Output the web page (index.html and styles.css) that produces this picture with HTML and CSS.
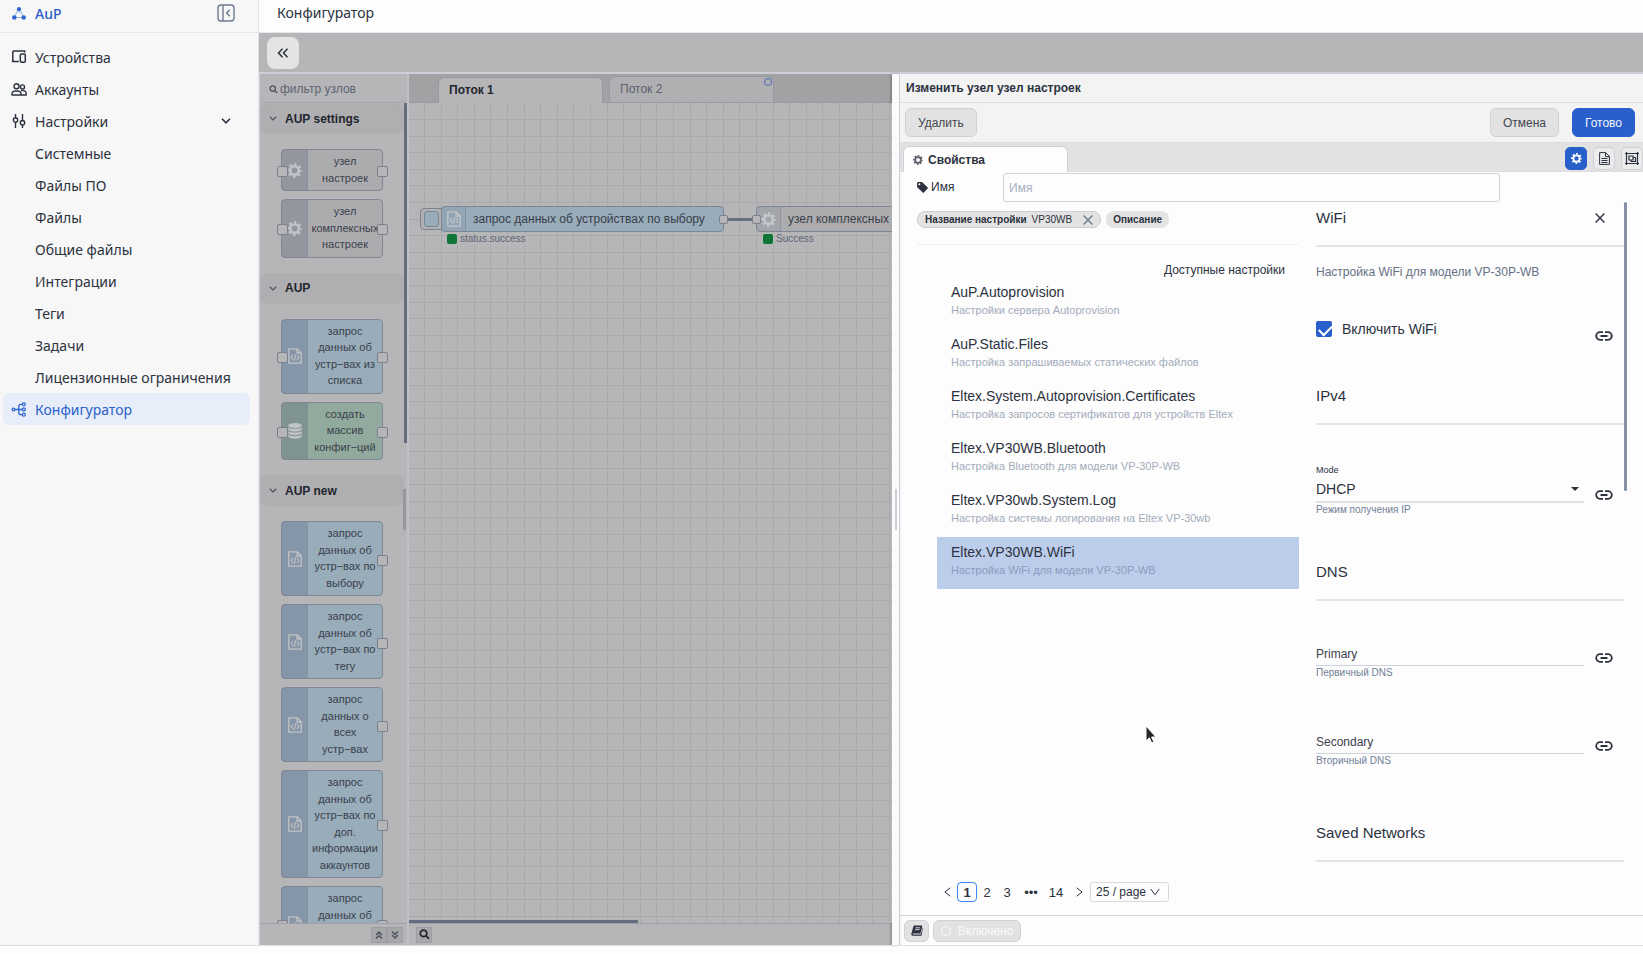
FILE: index.html
```html
<!DOCTYPE html>
<html lang="ru">
    <head>
        <meta charset="utf-8">
        <title>AuP - Конфигуратор</title>
        <link rel="stylesheet" href="styles.css">
    </head>
    <body>
        <svg class="defs" width="0" height="0">
            <symbol id="i-gear" viewBox="0 0 16 16">
                <circle cx="8" cy="8" r="4.600" fill="none" stroke="currentColor" stroke-width="2.800"/>
                <circle cx="8" cy="8" r="6.600" fill="none" stroke="currentColor" stroke-width="2.600" stroke-dasharray="2.600 2.584" stroke-dashoffset="1.300"/>
            </symbol>
            <symbol id="i-code" viewBox="0 0 14 16">
                <path d="M.8.8h8.400l4 4v10.400H.8zM9 .8v4.200h4.200" fill="none" stroke="currentColor" stroke-width="1.300"/>
                <path d="M5 7 3.200 9.500 5 12M9 7l1.800 2.500L9 12M7.700 6.200l-1.400 6.600" fill="none" stroke="currentColor" stroke-width="1.100"/>
            </symbol>
            <symbol id="i-db" viewBox="0 0 14 16">
                <ellipse cx="7" cy="2.600" rx="6.800" ry="2.500"/>
                <path d="M.2 4.200c2 2.200 11.600 2.200 13.600 0v2.200c-1.400 2.700-12.200 2.700-13.600 0zM.2 7.900c2 2.200 11.600 2.200 13.600 0v2.200c-1.400 2.700-12.200 2.700-13.600 0zM.2 11.600c2 2.200 11.600 2.200 13.600 0v1.700c-1.400 3.200-12.200 3.200-13.600 0z"/>
            </symbol>
            <symbol id="i-search" viewBox="0 0 12 12">
                <path d="M5 1.200a3.600 3.600 0 1 0 0 7.200 3.600 3.600 0 0 0 0-7.200zM7.800 7.600l3.200 3.200" fill="none" stroke="currentColor" stroke-width="1.900"/>
            </symbol>
            <symbol id="i-down" viewBox="0 0 10 6">
                <path d="M1 .8 5 4.800 9 .8" fill="none" stroke="currentColor" stroke-width="1.600"/>
            </symbol>
            <symbol id="i-link" viewBox="0 0 18 10">
                <path d="M8 1.200H5a3.800 3.800 0 0 0 0 7.600h3M10 1.200h3a3.800 3.800 0 0 1 0 7.600h-3M5.500 5h7" fill="none" stroke="currentColor" stroke-width="1.800"/>
            </symbol>
            <symbol id="i-close" viewBox="0 0 10 10">
                <path d="m.6.6 8.800 8.800M9.400.6.6 9.400" fill="none" stroke="currentColor" stroke-width="1.400"/>
            </symbol>
        </svg>

        <div class="app">
            <aside class="sidebar">
                <div class="brand">
                    <svg class="brand-logo" viewBox="0 0 14 13" width="14" height="13">
                        <path d="M7 3v3M5.500 3.500 3 9M8.500 3.500 11 9M4 10.500h6" stroke="#8fb0e4" fill="none"/>
                        <g fill="#2f66cd"><circle cx="7" cy="2.200" r="2.100"/><circle cx="2.300" cy="10.500" r="2.300"/><circle cx="11.700" cy="10.500" r="2.300"/></g>
                    </svg>
                    <a href="#" class="brand-name">AuP</a>
                    <button class="collapse" aria-label="Свернуть меню">
                        <svg viewBox="0 0 18 18" width="18" height="18" fill="none" stroke="#6d7b90" stroke-width="1.400">
                            <rect x="1" y="1" width="16" height="16" rx="3"/><path d="M6 1v16M12.800 5.800 9.600 9l3.200 3.200"/>
                        </svg>
                    </button>
                </div>
                <nav class="menu">
                    <a href="#" class="menu-item">
                        <svg viewBox="0 0 16 14" width="16" height="14" fill="none" stroke="#2c3240" stroke-width="1.500"><path d="M7.500 11.500H3.200c-1 0-1.400-.5-1.400-1.400V2.300c0-1 .4-1.400 1.400-1.400h10.500v1.700M.8 11.500h7"/><rect x="9.300" y="4" width="5" height="8.300" rx="1.200"/></svg>
                        Устройства
                    </a>
                    <a href="#" class="menu-item">
                        <svg viewBox="0 0 16 13" width="16" height="13" fill="none" stroke="#2c3240" stroke-width="1.400"><circle cx="5.500" cy="3.300" r="2.500"/><circle cx="11.500" cy="3.900" r="2"/><path d="M1.200 12c-.8-2 .8-4 2.800-4h3c2 0 3.500 2 2.900 4zM10 7.500h2.200c2 0 3.400 1.700 2.900 4.500H10"/></svg>
                        Аккаунты
                    </a>
                    <a href="#" class="menu-item">
                        <svg viewBox="0 0 14 14" width="14" height="14" fill="none" stroke="#2c3240" stroke-width="1.400"><path d="M3.500 0v4M3.500 8v6M10.500 0v6.500M10.500 11v3"/><circle cx="3.500" cy="6" r="2.200"/><circle cx="10.500" cy="8.700" r="2.200"/></svg>
                        Настройки
                        <svg class="menu-arrow" width="10" height="6" color="#2c3240"><use href="#i-down"/></svg>
                    </a>
                    <a href="#" class="menu-item sub">Системные</a>
                    <a href="#" class="menu-item sub">Файлы ПО</a>
                    <a href="#" class="menu-item sub">Файлы</a>
                    <a href="#" class="menu-item sub">Общие файлы</a>
                    <a href="#" class="menu-item sub">Интеграции</a>
                    <a href="#" class="menu-item sub">Теги</a>
                    <a href="#" class="menu-item sub">Задачи</a>
                    <a href="#" class="menu-item sub">Лицензионные ограничения</a>
                    <a href="#" class="menu-item active">
                        <svg viewBox="0 0 15 15" width="15" height="15" fill="none" stroke="#2f66cd" stroke-width="1.300"><circle cx="2" cy="7.500" r="1.400"/><circle cx="12.300" cy="2.300" r="1.500"/><circle cx="12.300" cy="7.500" r="1.500"/><circle cx="12.300" cy="12.700" r="1.500"/><path d="M3.400 7.500h7.400M10.800 2.300H9.500c-1.500 0-2.200.8-2.200 2.200v6c0 1.400.7 2.200 2.200 2.200h1.300"/></svg>
                        Конфигуратор
                    </a>
                </nav>
            </aside>

            <main class="main">
                <h1 class="page-title">Конфигуратор</h1>
                <div class="toolbar">
                    <button class="back" aria-label="Назад">
                        <svg viewBox="0 0 12 10" width="12" height="10" fill="none" stroke="#2c3240" stroke-width="1.500"><path d="M5.500.8 1.500 5l4 4.200M10.500.8 6.500 5l4 4.200"/></svg>
                    </button>
                </div>

                <div class="editor">
                    <section class="palette">
                        <label class="palette-search">
                            <svg width="9" height="9"><use href="#i-search"/></svg>
                            <input type="text" placeholder="фильтр узлов" aria-label="фильтр узлов">
                        </label>
                        <div class="palette-list">
                            <div class="category"><svg width="8" height="5"><use href="#i-down"/></svg>AUP settings</div>
                            <div class="nodes">
                                <div class="node grey in out"><span class="node-icon"><svg width="15" height="15"><use href="#i-gear"/></svg></span><span class="node-label">узел<br>настроек</span></div>
                                <div class="node grey in out"><span class="node-icon"><svg width="15" height="15"><use href="#i-gear"/></svg></span><span class="node-label">узел<br>комплексных<br>настроек</span></div>
                            </div>
                            <div class="category"><svg width="8" height="5"><use href="#i-down"/></svg>AUP</div>
                            <div class="nodes">
                                <div class="node blue in out"><span class="node-icon"><svg width="14" height="16"><use href="#i-code"/></svg></span><span class="node-label">запрос<br>данных об<br>устр−вах из<br>списка</span></div>
                                <div class="node green in out"><span class="node-icon"><svg width="14" height="16"><use href="#i-db"/></svg></span><span class="node-label">создать<br>массив<br>конфиг−ций</span></div>
                            </div>
                            <div class="category"><svg width="8" height="5"><use href="#i-down"/></svg>AUP new</div>
                            <div class="nodes">
                                <div class="node blue out"><span class="node-icon"><svg width="14" height="16"><use href="#i-code"/></svg></span><span class="node-label">запрос<br>данных об<br>устр−вах по<br>выбору</span></div>
                                <div class="node blue out"><span class="node-icon"><svg width="14" height="16"><use href="#i-code"/></svg></span><span class="node-label">запрос<br>данных об<br>устр−вах по<br>тегу</span></div>
                                <div class="node blue out"><span class="node-icon"><svg width="14" height="16"><use href="#i-code"/></svg></span><span class="node-label">запрос<br>данных о<br>всех<br>устр−вах</span></div>
                                <div class="node blue out"><span class="node-icon"><svg width="14" height="16"><use href="#i-code"/></svg></span><span class="node-label">запрос<br>данных об<br>устр−вах по<br>доп.<br>информации<br>аккаунтов</span></div>
                                <div class="node blue in out"><span class="node-icon"><svg width="14" height="16"><use href="#i-code"/></svg></span><span class="node-label">запрос<br>данных об<br>устр−вах по<br>списку</span></div>
                            </div>
                            <i class="palette-scroll"></i>
                            <i class="palette-grip"></i>
                        </div>
                        <div class="palette-footer">
                            <button aria-label="Свернуть все"><svg viewBox="0 0 8 8" width="8" height="8" fill="none" stroke="currentColor" stroke-width="1.500"><path d="m1 4 3-3 3 3M1 7.500l3-3 3 3"/></svg></button>
                            <button aria-label="Развернуть все"><svg viewBox="0 0 8 8" width="8" height="8" fill="none" stroke="currentColor" stroke-width="1.500"><path d="m1 .5 3 3 3-3M1 4l3 3 3-3"/></svg></button>
                        </div>
                    </section>

                    <section class="workspace">
                        <div class="flow-tabs">
                            <a href="#" class="flow-tab current">Поток 1</a>
                            <a href="#" class="flow-tab">Поток 2<i class="changed"></i></a>
                        </div>
                        <div class="canvas">
                            <span class="inject"><i></i></span>
                            <div class="flow-node n1 blue"><span class="flow-icon"><svg width="14" height="16"><use href="#i-code"/></svg></span>запрос данных об устройствах по выбору</div>
                            <i class="wire"></i>
                            <div class="flow-node n2 grey"><span class="flow-icon"><svg width="15" height="15"><use href="#i-gear"/></svg></span>узел комплексных настроек</div>
                            <i class="port p1"></i>
                            <i class="port p2"></i>
                            <span class="status s1">status.success</span>
                            <span class="status s2">Success</span>
                            <i class="canvas-scroll"></i>
                        </div>
                        <div class="canvas-footer">
                            <button aria-label="Поиск"><svg width="11" height="11"><use href="#i-search"/></svg></button>
                        </div>
                    </section>

                    <div class="splitter"><i></i></div>

                    <section class="tray">
                        <h2 class="tray-title">Изменить узел узел настроек</h2>
                        <div class="tray-buttons">
                            <button class="btn">Удалить</button>
                            <button class="btn push">Отмена</button>
                            <button class="btn primary">Готово</button>
                        </div>
                        <div class="tray-tabs">
                            <a href="#" class="tray-tab"><svg width="10" height="10"><use href="#i-gear"/></svg>Свойства</a>
                            <div class="tray-tools">
                                <button class="tool on" aria-label="Свойства"><svg width="11" height="11"><use href="#i-gear"/></svg></button>
                                <button class="tool" aria-label="Описание"><svg viewBox="0 0 11 13" width="11" height="13" fill="none" stroke="currentColor"><path d="M.6.6h6l3.800 3.800v8H.6zM6.500.6v4h4M2.500 6.500h6M2.500 8.500h6M2.500 10.500h6"/></svg></button>
                                <button class="tool" aria-label="Внешний вид"><svg viewBox="0 0 14 13" width="14" height="13" fill="none" stroke="currentColor" stroke-width="1.200"><path d="M1.500 1.500h11v10h-11zM4 4h4v4H4zM8 5.500h2.500v4H6V8"/><path d="M0 1.500h3M11 1.500h3M0 11.500h3M11 11.500h3M1.500 0v3M12.500 0v3M1.500 10v3M12.500 10v3"/></svg></button>
                            </div>
                        </div>

                        <div class="tray-body">
                            <div class="name-row">
                                <label for="node-name"><svg viewBox="0 0 11 11" width="11" height="11" fill="#2c3240"><path fill-rule="evenodd" d="M0 .8 1 0h4l5.700 5.400c.4.400.4.800 0 1.200l-3.800 4c-.4.400-.8.400-1.200 0L.2 5.300zm2.400.5a1 1 0 1 0 0 2 1 1 0 0 0 0-2z"/></svg>Имя</label>
                                <input id="node-name" type="text" placeholder="Имя">
                            </div>

                            <div class="columns">
                                <div class="left">
                                    <div class="pills">
                                        <span class="pill outlined"><b>Название настройки</b> VP30WB <button aria-label="Убрать"><svg width="10" height="10"><use href="#i-close"/></svg></button></span>
                                        <span class="pill"><b>Описание</b></span>
                                    </div>
                                    <div class="available">Доступные настройки</div>
                                    <ul class="settings">
                                        <li><b>AuP.Autoprovision</b><span>Настройки сервера Autoprovision</span></li>
                                        <li><b>AuP.Static.Files</b><span>Настройка запрашиваемых статических файлов</span></li>
                                        <li><b>Eltex.System.Autoprovision.Certificates</b><span>Настройка запросов сертификатов для устройств Eltex</span></li>
                                        <li><b>Eltex.VP30WB.Bluetooth</b><span>Настройка Bluetooth для модели VP-30P-WB</span></li>
                                        <li><b>Eltex.VP30wb.System.Log</b><span>Настройка системы логирования на Eltex VP-30wb</span></li>
                                        <li class="selected"><b>Eltex.VP30WB.WiFi</b><span>Настройка WiFi для модели VP-30P-WB</span></li>
                                    </ul>
                                    <div class="pager">
                                        <button aria-label="Назад"><svg viewBox="0 0 7 10" width="7" height="10" fill="none" stroke="currentColor"><path d="M6.300.8.900 5l5.400 4.200"/></svg></button>
                                        <button class="current">1</button>
                                        <button>2</button>
                                        <button>3</button>
                                        <span class="dots">•••</span>
                                        <button class="wide">14</button>
                                        <button aria-label="Вперёд"><svg viewBox="0 0 7 10" width="7" height="10" fill="none" stroke="currentColor"><path d="M.7.8 6.100 5 .7 9.200"/></svg></button>
                                        <span class="page-size">
                                            <select aria-label="Размер страницы"><option>25 / page</option></select>
                                            <svg viewBox="0 0 10 8" width="10" height="8" fill="none" stroke="currentColor"><path d="M.7 1 5 6.800 9.300 1"/></svg>
                                        </span>
                                    </div>
                                </div>

                                <form class="right">
                                    <div class="form-title"><h3>WiFi</h3><button type="button" aria-label="Закрыть"><svg width="10" height="10"><use href="#i-close"/></svg></button></div>
                                    <p class="form-text">Настройка WiFi для модели VP-30P-WB</p>
                                    <div class="check-row">
                                        <label><input type="checkbox" checked>Включить WiFi</label>
                                        <svg class="link" width="18" height="10"><use href="#i-link"/></svg>
                                    </div>
                                    <h3 class="group">IPv4</h3>
                                    <div class="field select">
                                        <label for="mode">Mode</label>
                                        <div class="line">
                                            <select id="mode"><option>DHCP</option></select>
                                        </div>
                                        <svg class="link" width="18" height="10"><use href="#i-link"/></svg>
                                        <small>Режим получения IP</small>
                                    </div>
                                    <h3 class="group">DNS</h3>
                                    <div class="field">
                                        <input type="text" placeholder="Primary" aria-label="Primary">
                                        <svg class="link" width="18" height="10"><use href="#i-link"/></svg>
                                        <small>Первичный DNS</small>
                                    </div>
                                    <div class="field">
                                        <input type="text" placeholder="Secondary" aria-label="Secondary">
                                        <svg class="link" width="18" height="10"><use href="#i-link"/></svg>
                                        <small>Вторичный DNS</small>
                                    </div>
                                    <h3 class="group last">Saved Networks</h3>
                                    <i class="form-scroll"></i>
                                </form>
                            </div>
                        </div>

                        <div class="tray-footer">
                            <button class="small" aria-label="Справка"><svg viewBox="0 0 12 11" width="12" height="11"><path fill="#2c3240" d="M3.500.5h7.800L9.500 8.500H2.200c-.8 0-.8 1 0 1h7.600l1.700-7 .4.600L10.500 10.700H1.800C.5 10.700 0 9.700.4 8.500L2.300 1.700C2.500 1 2.800.5 3.500.5z"/><path stroke="#fff" stroke-width=".8" d="M4.500 2.800h4.500M4 4.700h4.500"/></svg></button>
                            <button class="small enabled"><i></i>Включено</button>
                        </div>
                    </section>
                </div>
            </main>
        </div>
        <div class="bottom"></div>
        <svg class="cursor" viewBox="0 0 12 19" width="12" height="19"><path d="M1 1v15l3.400-3.200 2.300 5.200 2.200-1-2.300-5H11z" fill="#262626" stroke="#fff"/></svg>
    </body>
</html>
```
FILE: styles.css
```css
* {
    box-sizing: border-box;
}
body {
    margin: 0;
    height: 100vh;
    display: flex;
    flex-direction: column;
    overflow: hidden;
    background: #fdfdfd;
    color: #2c3240;
    font-family: "Liberation Sans", Arial, sans-serif;
    font-size: 12px;
}
h1, h2, h3, p, ul {
    margin: 0;
    padding: 0;
    font-weight: normal;
}
a {
    color: inherit;
    text-decoration: none;
}
button, input, select {
    font: inherit;
    color: inherit;
    margin: 0;
    padding: 0;
    border: 0;
    background: none;
    outline: none;
}
button {
    display: inline-flex;
    align-items: center;
    justify-content: center;
}
svg {
    display: block;
    flex: none;
    fill: currentColor;
}
i {
    display: block;
}
.defs {
    position: absolute;
}
.app {
    flex: 1;
    min-height: 0;
    display: flex;
}
.bottom {
    flex: none;
    height: 9px;
    border-top: 1px solid #dcdee4;
}

/* sidebar */
.sidebar {
    flex: none;
    width: 259px;
    background: #f7f7f7;
    border-right: 1px solid #e3e4ea;
    font-family: "Noto Sans", sans-serif;
    font-size: 14px;
}
.brand {
    height: 33px;
    display: flex;
    align-items: center;
    padding: 0 23px 6px 12px;
    border-bottom: 1px solid #e6e7ec;
}
.brand-name {
    flex: 1;
    margin-left: 9px;
    color: #2a5fcb;
    font-weight: 500;
}
.menu {
    padding: 8px 8px 0 3px;
}
.menu-item {
    height: 32px;
    display: flex;
    align-items: center;
    padding-left: 8px;
    border-radius: 6px;
}
.menu-item > svg:first-child {
    width: 16px;
    fill: none;
    margin-right: 8px;
}
.menu-item.sub {
    padding-left: 32px;
}
.menu-item.active {
    background: #e7eef9;
    color: #2a5fcb;
}
.menu-arrow {
    margin: 0 19px 0 auto;
}

/* main */
.main {
    flex: 1;
    min-width: 0;
    display: flex;
    flex-direction: column;
}
.page-title {
    height: 33px;
    padding: 0 18px 6px;
    border-bottom: 1px solid #e6e7ec;
    font: 14px/26px "Noto Sans", sans-serif;
}
.toolbar {
    height: 39px;
    padding: 4px 8px;
    background: #b6b6b8;
}
.back {
    width: 32px;
    height: 32px;
    border-radius: 8px;
    background: #e4e4e4;
}
.back svg, .collapse svg {
    fill: none;
}
.editor {
    flex: 1;
    min-height: 0;
    display: grid;
    grid-template-columns: 150px minmax(0, 483fr) 8px minmax(0, 743fr);
    border-top: 2px solid #cdced8;
}

/* palette */
.palette {
    display: flex;
    flex-direction: column;
    min-height: 0;
    border-left: 1px solid #cdced8;
    border-right: 2px solid #c0c0c9;
    background: #b6b6b8;
    color: #4c5362;
}
.palette-search {
    height: 29px;
    display: flex;
    align-items: center;
    gap: 2px;
    padding: 2px 0 0 9px;
    border-bottom: 1px solid #a4a5ac;
    border-radius: 0 0 6px 6px;
}
.palette-search input {
    width: 110px;
}
.palette-search input::placeholder {
    color: #5d6473;
    opacity: 1;
}
.palette-list {
    flex: 1;
    min-height: 0;
    overflow: hidden;
    position: relative;
}
.palette-scroll {
    position: absolute;
    top: 0;
    right: 0;
    width: 3px;
    height: 340px;
    background: #646c80;
}
.palette-grip {
    position: absolute;
    top: 386px;
    right: 1px;
    width: 3px;
    height: 41px;
    background: #98989b;
}
.category {
    height: 31px;
    display: flex;
    align-items: center;
    gap: 8px;
    margin-right: 3px;
    padding-left: 9px;
    background: #afafb1;
    border-radius: 8px;
    color: #22262f;
    font-weight: bold;
}
.category svg {
    color: #4c5362;
}
.nodes {
    display: flex;
    flex-direction: column;
    gap: 8px;
    padding: 15px 24px 15px 21px;
}
.node {
    position: relative;
    display: flex;
    border: 1px solid #818795;
    border-radius: 4px;
    font-size: 11px;
    line-height: 1.5;
    text-align: center;
    color: #3a3f4b;
}
.node-icon {
    flex: none;
    width: 26px;
    display: flex;
    align-items: center;
    justify-content: center;
    border-right: 1px solid #8a8f9b;
    background: rgba(70, 85, 110, .25);
    color: #c2c3c6;
}
.node-label {
    flex: 1;
    padding: 3px 0 4px;
    white-space: nowrap;
}
.grey {
    background: #acacaf;
}
.blue {
    background: #98acba;
}
.green {
    background: #92aa9d;
}
.node.in::before, .node.out::after, .port {
    content: "";
    position: absolute;
    width: 9px;
    height: 9px;
    top: calc(50% - 4px);
    background: #b6b6b8;
    border: 1px solid #7a808e;
    border-radius: 2px;
}
.node.in::before {
    left: -5px;
}
.node.out::after {
    right: -6px;
}
.palette-footer, .canvas-footer {
    flex: none;
    height: 22px;
    display: flex;
    align-items: center;
    background: #b6b6b8;
    border-top: 1px solid #a0a1aa;
}
.palette-footer {
    justify-content: flex-end;
    padding-right: 4px;
}
.palette-footer button, .canvas-footer button {
    width: 16px;
    height: 16px;
    border: 1px solid #9c9da6;
    background: #a8a8ab;
}
.palette-footer svg {
    fill: none;
}
.canvas-footer {
    padding-left: 7px;
}
.canvas-footer button {
    color: #22262f;
}

/* workspace */
.workspace {
    display: flex;
    flex-direction: column;
    min-width: 0;
    min-height: 0;
}
.flow-tabs {
    flex: none;
    height: 29px;
    display: flex;
    align-items: flex-end;
    gap: 6px;
    padding-left: 29px;
    background: #a2a2a4;
    border-bottom: 1px solid #989aa3;
}
.flow-tab {
    position: relative;
    width: 165px;
    height: 26px;
    padding-left: 10px;
    border: 1px solid #9698a3;
    border-bottom: 0;
    border-radius: 6px 6px 0 0;
    background: #b0b0b2;
    color: #5a6070;
    line-height: 25px;
}
.flow-tab.current {
    background: #b6b6b8;
    margin-bottom: -1px;
    color: #22262f;
    font-weight: bold;
}
.changed {
    position: absolute;
    top: 1px;
    right: 1px;
    width: 8px;
    height: 8px;
    border: 1px solid #4a69b0;
    border-radius: 50%;
}
.canvas {
    flex: 1;
    min-height: 0;
    position: relative;
    overflow: hidden;
    background-color: #b6b6b8;
    /* 20 unit grid at 83% zoom: 5 cells are 83px */
    background-image:
        repeating-linear-gradient(90deg, #aaaaad 0 1px, transparent 1px 17px, #aaaaad 17px 18px, transparent 18px 33px, #aaaaad 33px 34px, transparent 34px 50px, #aaaaad 50px 51px, transparent 51px 66px, #aaaaad 66px 67px, transparent 67px 83px),
        repeating-linear-gradient(#aaaaad 0 1px, transparent 1px 17px, #aaaaad 17px 18px, transparent 18px 33px, #aaaaad 33px 34px, transparent 34px 50px, #aaaaad 50px 51px, transparent 51px 66px, #aaaaad 66px 67px, transparent 67px 83px);
    background-size: 83px 83px;
    background-position: 15px 16px;
}
.flow-node {
    position: absolute;
    top: 103px;
    height: 26px;
    display: flex;
    align-items: center;
    gap: 7px;
    border: 1px solid #7b8795;
    border-radius: 4px;
    color: #3a3f4b;
    white-space: nowrap;
}
.flow-icon {
    width: 24px;
    height: 24px;
    display: flex;
    align-items: center;
    justify-content: center;
    border-right: 1px solid rgba(70, 85, 110, .2);
    background: rgba(70, 85, 110, .08);
    color: #c2c6ca;
}
.n1 {
    left: 32px;
    width: 283px;
}
.n2 {
    left: 347px;
    width: 240px;
}
.inject {
    position: absolute;
    left: 11px;
    top: 105px;
    width: 26px;
    height: 22px;
    padding: 2px 3px;
    border: 1px solid #7b8190;
    border-radius: 4px;
    background: #b1b1b4;
}
.inject i {
    width: 15px;
    height: 16px;
    border: 1px solid #7b8795;
    border-radius: 3px;
    background: #98acba;
}
.wire {
    position: absolute;
    left: 315px;
    top: 115px;
    width: 32px;
    height: 3px;
    background: #666e80;
}
.port {
    top: 112px;
}
.p1 {
    left: 310px;
}
.p2 {
    left: 343px;
}
.status {
    position: absolute;
    top: 130px;
    padding: 0 2px 0 13px;
    background: #b6b6b8;
    color: #5d6473;
    font-size: 10px;
    line-height: 12px;
}
.status::before {
    content: "";
    position: absolute;
    left: 0;
    top: 1px;
    width: 10px;
    height: 10px;
    border-radius: 2px;
    background: #0d7536;
}
.s1 {
    left: 38px;
}
.s2 {
    left: 354px;
}
.canvas-scroll {
    position: absolute;
    left: 0;
    bottom: 0;
    width: 229px;
    height: 3px;
    background: #646c80;
}

/* splitter */
.splitter {
    display: flex;
    align-items: center;
    justify-content: center;
    background: #fbfbfc;
    border-right: 1px solid #cdced8;
    box-shadow: -1px 0 3px rgba(0, 0, 0, .3);
}
.splitter i {
    width: 2px;
    height: 41px;
    background: #cdced8;
}

/* edit tray */
.tray {
    display: flex;
    flex-direction: column;
    min-width: 0;
    min-height: 0;
    overflow: hidden;
}
.tray-title {
    flex: none;
    height: 29px;
    padding-left: 6px;
    background: #f3f3f3;
    border-bottom: 1px solid #dcdce4;
    font-size: 12px;
    font-weight: bold;
    line-height: 28px;
}
.tray-buttons {
    flex: none;
    height: 40px;
    display: flex;
    align-items: center;
    padding: 0 8px 0 5px;
    background: #f3f3f3;
    border-bottom: 1px solid #dcdce4;
}
.btn {
    height: 29px;
    padding: 0 12px;
    border: 1px solid #cfd0d8;
    border-radius: 6px;
    background: #e2e2e2;
    color: #43464f;
}
.btn.push {
    margin: 0 13px 0 auto;
}
.btn.primary {
    background: #285fca;
    border-color: #285fca;
    color: #f4f6fb;
}
.tray-tabs {
    flex: none;
    height: 29px;
    display: flex;
    justify-content: space-between;
    align-items: flex-end;
    padding-left: 3px;
    background: #e2e2e2;
    border-bottom: 1px solid #dcdce0;
}
.tray-tab {
    width: 165px;
    height: 26px;
    margin-bottom: -1px;
    display: flex;
    align-items: center;
    gap: 5px;
    padding-left: 9px;
    border: 1px solid #cfd0d8;
    border-bottom: 0;
    border-radius: 6px 6px 0 0;
    background: #fdfdfd;
    font-weight: bold;
}
.tray-tab svg {
    color: #5a5e68;
}
.tray-tools {
    display: flex;
    gap: 6px;
    margin-bottom: 1px;
}
.tool {
    width: 22px;
    height: 23px;
    border: 1px solid #cfd0d8;
    border-radius: 5px;
    background: #ececec;
}
.tool:not(.on) svg {
    fill: none;
}
.tool.on {
    background: #285fca;
    border-color: #285fca;
    color: #fff;
}
.tray-body {
    flex: 1;
    min-height: 0;
    display: flex;
    flex-direction: column;
    padding: 1px 16px 0 17px;
}
.name-row {
    flex: none;
    display: flex;
    align-items: flex-start;
}
.name-row label {
    width: 86px;
    display: flex;
    align-items: center;
    gap: 3px;
    height: 28px;
}
.name-row input {
    width: 70%;
    height: 29px;
    padding: 0 5px;
    border: 1px solid #cfd0d8;
    border-radius: 3px;
}
.name-row input::placeholder {
    color: #a6b0c2;
}
.columns {
    flex: 1;
    min-height: 0;
    display: grid;
    grid-template-columns: minmax(0, 382fr) minmax(0, 311fr);
    gap: 17px;
}
.left {
    display: flex;
    flex-direction: column;
    padding-top: 9px;
}
.pills {
    display: flex;
    gap: 5px;
    height: 34px;
    border-bottom: 1px solid #f0f0f0;
}
.pill {
    height: 17px;
    display: flex;
    align-items: center;
    gap: 5px;
    padding: 0 7px;
    border-radius: 8px;
    background: #e3e3e3;
    font-size: 10px;
}
.pill.outlined {
    border: 1px solid #cbccd6;
}
.pill button {
    margin-left: 6px;
    color: #6d7b90;
}
.available {
    margin: 18px 14px 0 0;
    text-align: right;
    line-height: 14px;
}
.settings {
    list-style: none;
    margin-left: 20px;
}
.settings li {
    height: 52px;
    padding: 6px 14px;
    overflow: hidden;
    white-space: nowrap;
}
.settings b {
    display: block;
    font-size: 14px;
    font-weight: normal;
    line-height: 19px;
}
.settings span {
    display: block;
    color: #a3acbb;
    font-size: 11px;
    line-height: 16px;
}
.settings .selected {
    background: #bccdec;
}
.settings .selected span {
    color: #8d9bbb;
}
.pager {
    margin: auto 0 13px 20px;
    display: flex;
    align-items: center;
    font-size: 13px;
}
.pager svg {
    fill: none;
}
.pager button {
    width: 20px;
    height: 20px;
}
.pager .current {
    border: 1px solid #3a86f6;
    border-radius: 4px;
    font-weight: bold;
}
.pager .wide {
    width: 22px;
    margin-right: 2px;
}
.dots {
    width: 28px;
    text-align: center;
}
.page-size {
    display: flex;
    align-items: center;
    width: 79px;
    height: 20px;
    margin-left: 1px;
    padding: 0 8px 0 5px;
    border: 1px solid #d9d9d9;
    border-radius: 3px;
}
.page-size select {
    appearance: none;
    flex: 1;
    min-width: 0;
    font-size: 12px;
}

/* setting form */
.right {
    position: relative;
    padding-right: 3px;
}
.form-scroll {
    position: absolute;
    top: 0;
    right: 0;
    width: 3px;
    height: 289px;
    border-radius: 2px;
    background: #8490a6;
}
.form-title, .group {
    border-bottom: 2px solid #e4e4e6;
}
.form-title {
    display: flex;
    justify-content: space-between;
    height: 45px;
    padding: 6px 19px 0 0;
}
.form-title h3, .group {
    font-size: 15px;
    line-height: 20px;
}
.form-title button {
    height: 20px;
}
.form-text {
    padding: 17px 0 41px;
    color: #667085;
    line-height: 16px;
}
.check-row {
    display: flex;
    justify-content: space-between;
    padding-right: 11px;
}
.check-row label {
    display: flex;
    gap: 10px;
    font-size: 14px;
    line-height: 16px;
}
.check-row input {
    appearance: none;
    width: 16px;
    height: 16px;
    border-radius: 2px;
    background: #285fca;
}
.check-row input::before {
    content: "";
    display: block;
    width: 11px;
    height: 6px;
    margin: 4px 3px;
    border-left: 2px solid #fff;
    border-bottom: 2px solid #fff;
    transform: rotate(-45deg);
}
.check-row .link {
    margin-top: 10px;
}
.group {
    height: 39px;
    margin-top: 45px;
}
.group.last {
    margin-top: 55px;
}
.field {
    display: grid;
    grid-template-columns: 1fr 18px;
    align-items: end;
    column-gap: 11px;
    padding-right: 11px;
    margin-top: 42px;
}
.field.select {
    margin-top: 39px;
}
.field + .field {
    margin-top: 51px;
}
.field label {
    grid-column: 1 / 3;
    font-size: 9px;
    line-height: 12px;
}
.line {
    display: flex;
}
.line::after {
    content: "";
    align-self: center;
    margin: 0 5px 0 -13px;
    border: 4px solid transparent;
    border-top-color: #2c3240;
    border-bottom: 0;
    pointer-events: none;
}
.line, .field input {
    width: 100%;
    height: 23px;
    border-bottom: 1px solid #cfd1da;
}
.field.select .line {
    height: 27px;
    border-bottom: 2px solid #e0e1e7;
}
.field input::placeholder {
    color: #3d414c;
    opacity: 1;
}
.field select {
    appearance: none;
    width: 100%;
    font-size: 14px;
}
.field small {
    color: #728097;
    font-size: 10px;
    line-height: 14px;
}
.field .link {
    margin-bottom: 3px;
}
.tray-footer {
    flex: none;
    height: 30px;
    display: flex;
    align-items: center;
    gap: 4px;
    padding-left: 4px;
    border-top: 1px solid #d3d4de;
}
.small {
    width: 25px;
    height: 22px;
    border: 1px solid #cfd0d8;
    border-radius: 6px;
    background: #e2e2e2;
}
.enabled {
    width: 88px;
    justify-content: flex-start;
    gap: 7px;
    padding-left: 7px;
    color: #fafafa;
}
.enabled i {
    width: 10px;
    height: 10px;
    border: 1px solid #fafafa;
    border-radius: 50%;
}
.cursor {
    position: absolute;
    left: 1145px;
    top: 725px;
}
```
